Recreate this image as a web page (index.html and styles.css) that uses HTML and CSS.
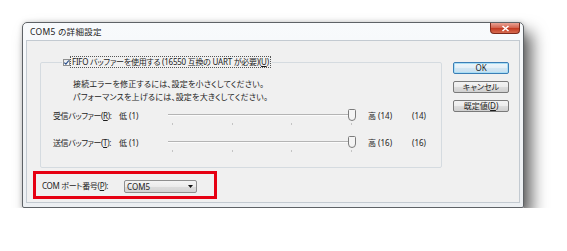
FILE: index.html
```html
<!DOCTYPE html>
<html lang="ja">
<head>
  <meta charset="UTF-8">
  <title>COM5 の詳細設定</title>
  <link rel="stylesheet" href="styles.css">
</head>
<body>
  <div class="page">
    <div class="window">
      <div class="titlebar">
        <span class="title">COM5 の詳細設定</span>
        <span class="close">
          <svg width="9" height="7" viewBox="0 0 9 7">
            <path d="M1.5 1 L7.5 6 M7.5 1 L1.5 6" stroke="#fff" stroke-width="1.6"/>
          </svg>
        </span>
      </div>

      <div class="client">
        <div class="main">
          <fieldset class="group">
            <legend>
              <span class="check">
                <svg width="7" height="7" viewBox="0 0 7 7">
                  <path d="M1.3 3.6 L2.9 5.2 L5.8 1.5" stroke="#2a4f8a" stroke-width="1.2" fill="none"/>
                </svg>
              </span>
              <span class="focus">FIFO バッファーを使用する (16550 互換の UART が必要)(<u>U</u>)</span>
            </legend>

            <p class="hint">接続エラーを修正するには、設定を小さくしてください。</p>
            <p class="hint">パフォーマンスを上げるには、設定を大きくしてください。</p>

            <div class="slider-row">
              <span class="slider-label">受信バッファー(<u>R</u>):</span>
              <span class="low">低 (1)</span>
              <div class="slider">
                <div class="track"></div>
                <div class="ticks"><i></i><i></i><i></i><i></i></div>
                <svg class="thumb" width="8" height="12" viewBox="0 0 8 12">
                  <path d="M0.5 1.5 Q0.5 0.5 1.5 0.5 H6.5 Q7.5 0.5 7.5 1.5 V8 Q7.5 11.5 4 11.5 Q0.5 11.5 0.5 8 Z" fill="#f4f4f4" stroke="#7c7c7c"/>
                </svg>
              </div>
              <span class="high">高 (14)</span>
              <span class="value">(14)</span>
            </div>

            <div class="slider-row">
              <span class="slider-label">送信バッファー(<u>T</u>):</span>
              <span class="low">低 (1)</span>
              <div class="slider">
                <div class="track"></div>
                <div class="ticks"><i></i><i></i><i></i><i></i></div>
                <svg class="thumb" width="8" height="12" viewBox="0 0 8 12">
                  <path d="M0.5 1.5 Q0.5 0.5 1.5 0.5 H6.5 Q7.5 0.5 7.5 1.5 V8 Q7.5 11.5 4 11.5 Q0.5 11.5 0.5 8 Z" fill="#f4f4f4" stroke="#7c7c7c"/>
                </svg>
              </div>
              <span class="high">高 (16)</span>
              <span class="value">(16)</span>
            </div>
          </fieldset>

          <div class="buttons">
            <button class="btn default">OK</button>
            <button class="btn">キャンセル</button>
            <button class="btn">既定値(<u>D</u>)</button>
          </div>
        </div>

        <div class="port-box">
          <span class="port-label">COM ポート番号(<u>P</u>):</span>
          <div class="select">
            <span>COM5</span>
            <svg width="5" height="3" viewBox="0 0 5 3"><path d="M0 0 H5 L2.5 3 Z" fill="#111"/></svg>
          </div>
        </div>
      </div>
    </div>
  </div>
</body>
</html>
```

FILE: styles.css
```css
body {
  margin: 0;
  background-color: #fff;
  font-family: "Noto Sans", "Noto Sans CJK JP", sans-serif;
  font-size: 8px;
  font-feature-settings: "palt";
  color: #1c1c1c;
}

.page {
  padding: 22px 0 0 22px;
}

.window {
  width: 502px;
  height: 186px;
  box-sizing: border-box;
  border: 1px solid #5e6266;
  border-radius: 5px 5px 2px 2px;
  background: linear-gradient(#f8fafc, #eceff2);
  box-shadow: 8px 10px 16px rgba(0, 0, 0, 0.6), 0 0 5px rgba(0, 0, 0, 0.18);
  padding: 0 3px 4px;
  display: flex;
  flex-direction: column;
}

.titlebar {
  height: 17px;
  display: flex;
  align-items: flex-start;
  padding-left: 4px;
}

.title {
  font-size: 8.5px;
  letter-spacing: 0.3px;
  line-height: 18px;
  color: #222;
}

.close {
  margin-left: auto;
  width: 30px;
  height: 11px;
  box-sizing: border-box;
  border: 1px solid #7d2a1c;
  border-top: none;
  border-radius: 0 0 4px 4px;
  background: linear-gradient(#e9a293, #d2604b 50%, #c2381f 51%, #d66a4f);
  display: flex;
  align-items: center;
  justify-content: center;
}

.client {
  flex: 1;
  border: 1px solid #c3cad1;
  background-color: #f0f0f0;
}

.main {
  display: flex;
  align-items: flex-start;
  padding: 16px 10px 0 13px;
}

.group {
  width: 402px;
  height: 111px;
  box-sizing: border-box;
  margin: 0;
  padding: 0 0 0 12px;
  border: 1px solid #d5dbe0;
  border-radius: 2px;
}

legend {
  margin-left: 9px;
  padding: 0 2px 0 1px;
  line-height: 10px;
  display: flex;
  align-items: center;
}

.check {
  width: 7px;
  height: 7px;
  box-sizing: border-box;
  border: 1px solid #8e8f8f;
  background: linear-gradient(#e9ecef, #fdfdfd);
  display: flex;
  margin-right: 1px;
}

.check svg {
  margin: -1px;
}

.focus {
  outline: 1px dotted #555;
  padding: 0 1px;
  letter-spacing: -0.25px;
}

.hint {
  margin: 0 0 0 20px;
  line-height: 13px;
  letter-spacing: 0.2px;
}

.hint:first-of-type {
  margin-top: 10px;
}

.slider-row {
  display: flex;
  align-items: flex-start;
  margin-top: 7px;
  height: 18px;
}

.slider-row + .slider-row {
  margin-top: 9px;
}

.slider-label {
  width: 66px;
  line-height: 12px;
  letter-spacing: -0.4px;
}

.low {
  width: 47px;
  line-height: 12px;
}

.slider {
  position: relative;
  width: 192px;
  height: 18px;
  margin-top: -1px;
  margin-right: 10px;
}

.track {
  margin: 5px 2px 0;
  height: 0;
  border-top: 1px solid #b4b4b4;
  border-bottom: 1px solid #fbfbfb;
}

.ticks {
  display: flex;
  justify-content: space-between;
  padding: 0 6px;
  margin-top: 7px;
}

.ticks i {
  width: 1px;
  height: 2px;
  background-color: #c4c4c4;
}

.thumb {
  position: absolute;
  left: 182px;
  top: 0;
}

.high {
  width: 44px;
  line-height: 12px;
}

.value {
  line-height: 12px;
}

.buttons {
  margin-left: 11px;
  margin-top: 5px;
  display: flex;
  flex-direction: column;
  gap: 7px;
}

.btn {
  width: 56px;
  height: 12px;
  padding: 0;
  font-family: inherit;
  font-size: 8px;
  font-feature-settings: "palt";
  line-height: 10px;
  color: #1c1c1c;
  border: 1px solid #7a7a7a;
  border-radius: 2px;
  background: linear-gradient(#f3f3f3, #ececec 50%, #dddddd 51%, #d0d0d0);
}

.btn.default {
  border-color: #3b7eb6;
  box-shadow: inset 0 0 0 1px #a9def5;
  background: linear-gradient(#eef6fb, #e3eff7 50%, #d2e6f3 51%, #c6dff0);
}

.port-box {
  margin: 3px 0 0 6px;
  width: 184px;
  height: 28px;
  box-sizing: border-box;
  border: 3px solid #e60012;
  display: flex;
  align-items: center;
  padding-left: 6px;
}

.port-label {
  width: 82px;
  margin-top: 1px;
  letter-spacing: -0.3px;
}

.select {
  width: 73px;
  height: 13px;
  box-sizing: border-box;
  border: 1px solid #8f8f8f;
  border-radius: 2px;
  background: linear-gradient(#f4f4f4, #ebebeb 50%, #dcdcdc 51%, #d4d4d4);
  display: flex;
  align-items: center;
  justify-content: space-between;
  padding: 0 3px 0 2px;
  margin-top: 2px;
}
```
